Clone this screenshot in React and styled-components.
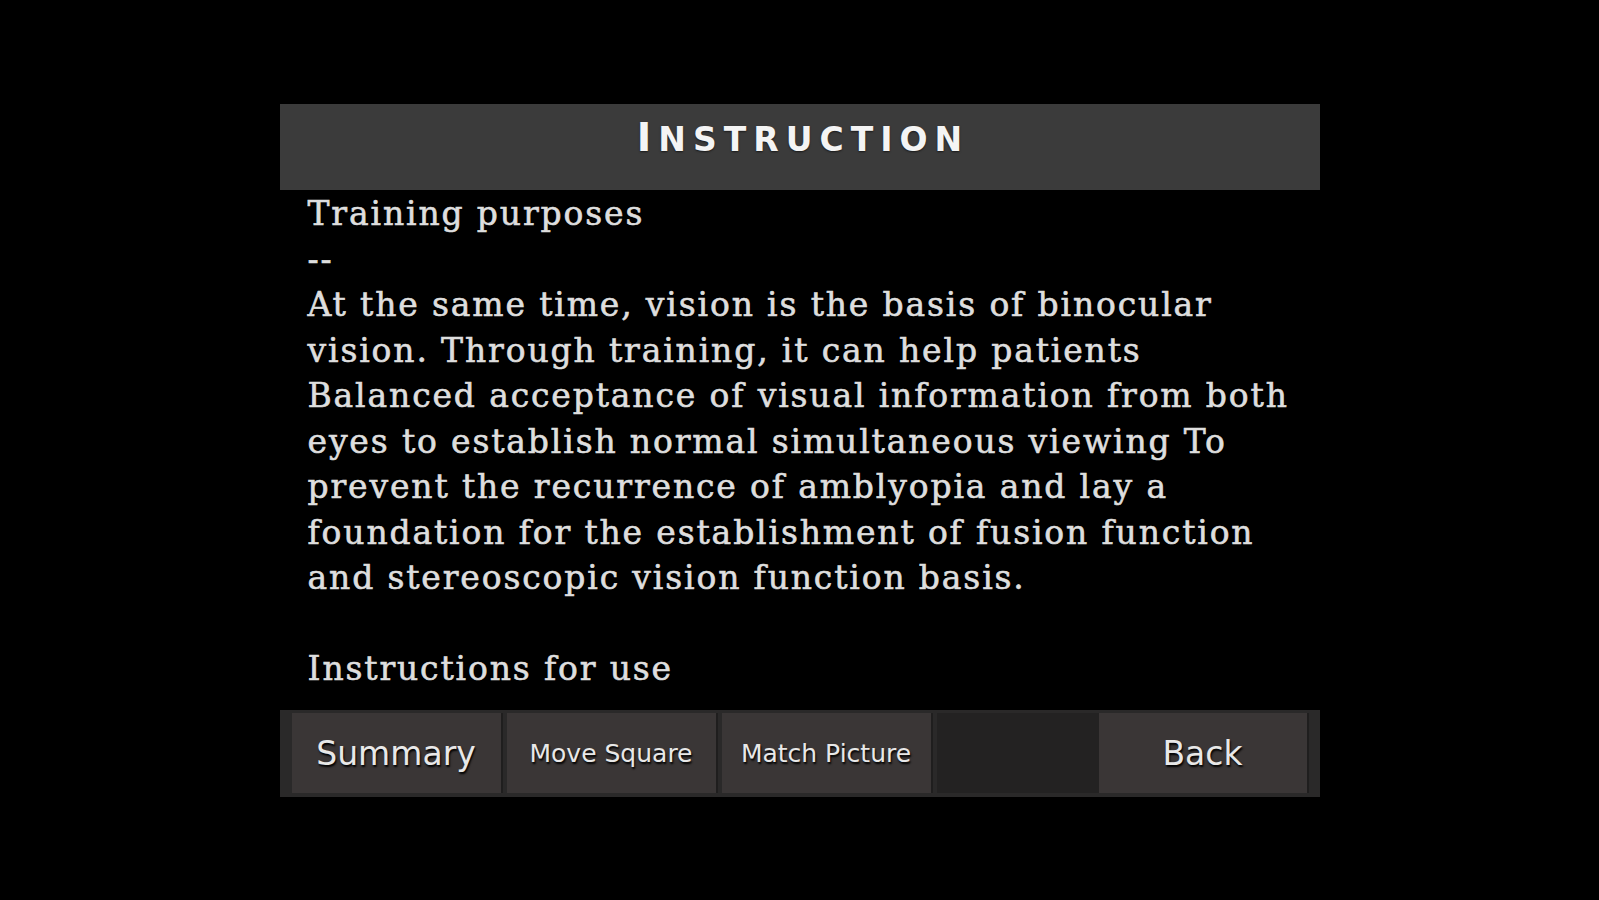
import React from "react";
import styled, { createGlobalStyle } from "styled-components";

const GlobalStyle = createGlobalStyle`
  * {
    box-sizing: border-box;
  }

  html, body, #root {
    margin: 0;
    height: 100%;
    width: 100%;
    background: #000;
  }
`;

const Screen = styled.main`
  min-height: 100%;
  background: #000;
  display: flex;
  justify-content: center;
  padding-top: 104px;
`;

const Panel = styled.section`
  width: 1040px;
  display: flex;
  flex-direction: column;
`;

const Header = styled.header`
  height: 86px;
  background: #3b3b3b;
  display: flex;
  justify-content: center;
  align-items: flex-start;
  padding: 14px 0 0 7px;
`;

const Title = styled.h1`
  margin: 0;
  font-family: "DejaVu Sans", sans-serif;
  font-weight: bold;
  font-size: 33px;
  line-height: 1;
  letter-spacing: 7px;
  color: #f4f4f4;
  text-shadow: 0 1px 2px rgba(0, 0, 0, 0.6);
`;

const BigCap = styled.span`
  font-size: 39px;
`;

const Body = styled.div`
  height: 520px;
  overflow: hidden;
  padding: 1px 0 0 28px;
  font-family: "DejaVu Serif", serif;
  font-size: 33px;
  line-height: 45.5px;
  letter-spacing: 1.85px;
  color: #dedede;
  -webkit-text-stroke: 0.6px #dedede;
  white-space: pre;
`;

const Toolbar = styled.nav`
  height: 87px;
  background: #2a2929;
  display: flex;
  align-items: stretch;
  gap: 4px;
  padding: 3px 11px 4px 12px;
`;

const Button = styled.button`
  width: ${({ wide }) => (wide ? "210px" : "211px")};
  border: none;
  border-right: 2px solid #1f1e1e;
  background: #3a3636;
  color: #e8e8e8;
  font-family: "DejaVu Sans", sans-serif;
  font-size: ${({ small }) => (small ? "25px" : "33px")};
  text-shadow: 1px 2px 2px #000;
  cursor: pointer;
  padding: 0;
`;

const Spacer = styled.div`
  flex: 1;
  background: #232222;
  margin-right: -4px;
`;

const text = `Training purposes
--
At the same time, vision is the basis of binocular
vision. Through training, it can help patients
Balanced acceptance of visual information from both
eyes to establish normal simultaneous viewing To
prevent the recurrence of amblyopia and lay a
foundation for the establishment of fusion function
and stereoscopic vision function basis.

Instructions for use`;

function App() {
  return (
    <Screen>
      <GlobalStyle />
      <Panel>
        <Header>
          <Title>
            <BigCap>I</BigCap>NSTRUCTION
          </Title>
        </Header>
        <Body>{text}</Body>
        <Toolbar>
          <Button>Summary</Button>
          <Button small>Move Square</Button>
          <Button small>Match Picture</Button>
          <Spacer />
          <Button wide>Back</Button>
        </Toolbar>
      </Panel>
    </Screen>
  );
}

export default App;
